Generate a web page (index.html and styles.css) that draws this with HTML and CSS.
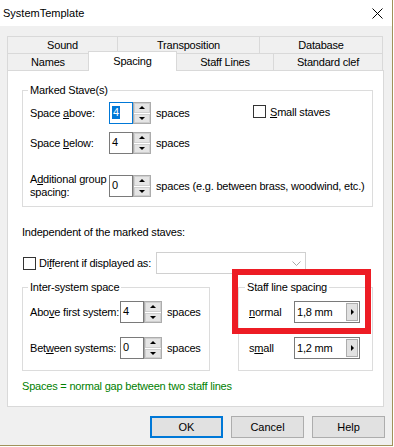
FILE: index.html
```html
<!DOCTYPE html>
<html>
<head>
	<meta charset="utf-8">
	<title>SystemTemplate</title>
	<link rel="stylesheet" href="styles.css">
</head>
<body>

	<div class="window">
		<div class="titlebar">
			<span class="title">SystemTemplate</span>
			<svg class="close" width="11" height="11" viewBox="0 0 11 11"><path d="M0.5 0.5L10.5 10.5M10.5 0.5L0.5 10.5" stroke="#000" stroke-width="1" fill="none"/></svg>
		</div>

		<div class="client">
			<div class="tabs">
				<div class="tabrow back">
					<div class="tab">Sound</div>
					<div class="tab">Transposition</div>
					<div class="tab">Database</div>
				</div>
				<div class="tabrow front">
					<div class="tab">Names</div>
					<div class="tab selected">Spacing</div>
					<div class="tab">Staff Lines</div>
					<div class="tab">Standard clef</div>
				</div>
			</div>

			<div class="panel">
				<fieldset class="group marked">
					<legend>Marked Stave(s)</legend>
					<div class="row">
						<span class="lbl">Space <u>a</u>bove:</span>
						<div class="num focus"><span class="sel">4</span></div>
						<div class="spin"><div class="up"><i></i></div><div class="down"><i></i></div></div>
						<span class="unit wide">spaces</span>
						<label class="check small-staves"><span class="box"></span><span><u>S</u>mall staves</span></label>
					</div>
					<div class="row">
						<span class="lbl">Space <u>b</u>elow:</span>
						<div class="num">4</div>
						<div class="spin"><div class="up"><i></i></div><div class="down"><i></i></div></div>
						<span class="unit">spaces</span>
					</div>
					<div class="row far">
						<span class="lbl two">A<u>d</u>ditional group<br>spacing:</span>
						<div class="num">0</div>
						<div class="spin"><div class="up"><i></i></div><div class="down"><i></i></div></div>
						<span class="unit">spaces (e.g. between brass, woodwind, etc.)</span>
					</div>
				</fieldset>

				<div class="indep">Independent of the marked staves:</div>

				<div class="row diff">
					<span class="box"></span>
					<span class="diff-lbl">Di<u>f</u>ferent if displayed as:</span>
					<div class="combo">
						<svg width="9" height="5" viewBox="0 0 9 5"><polyline points="0.5,0.5 4.5,4.5 8.5,0.5" stroke="#a8a8a8" fill="none"/></svg>
					</div>
				</div>

				<div class="lower">
					<fieldset class="group inter">
						<legend>Inter-system space</legend>
						<div class="row">
							<span class="lbl">Abo<u>v</u>e first system:</span>
							<div class="num">4</div>
							<div class="spin"><div class="up"><i></i></div><div class="down"><i></i></div></div>
							<span class="unit">spaces</span>
						</div>
						<div class="row">
							<span class="lbl">Bet<u>w</u>een systems:</span>
							<div class="num">0</div>
							<div class="spin"><div class="up"><i></i></div><div class="down"><i></i></div></div>
							<span class="unit">spaces</span>
						</div>
					</fieldset>

					<fieldset class="group staffline">
						<legend>Staff line spacing</legend>
						<div class="row">
							<span class="lbl"><u>n</u>ormal</span>
							<div class="pick"><span class="val">1,8 mm</span><span class="pick-btn"><i></i></span></div>
						</div>
						<div class="row">
							<span class="lbl">s<u>m</u>all</span>
							<div class="pick"><span class="val">1,2 mm</span><span class="pick-btn"><i></i></span></div>
						</div>
					</fieldset>
				</div>

				<div class="note">Spaces = normal gap between two staff lines</div>

				<div class="highlight"></div>
			</div>

			<div class="buttons">
				<button class="default">OK</button>
				<button>Cancel</button>
				<button>Help</button>
			</div>
		</div>
	</div>

</body>
</html>
```

FILE: styles.css
```css
html{
	background: #fff;
}
body{
	margin: 0;
	font-family: "Liberation Sans", Arial, sans-serif;
	font-size: 11px;
	letter-spacing: -0.2px;
	color: #000;
}
/*--------Ventana-----------*/
.window{
	width: 392px;
	height: 445px;
	border-right: 1px solid #a0925a;
	border-bottom: 1px solid #a0925a;
	background: #f0f0f0;
}
.titlebar{
	height: 26px;
	background: #fff;
	display: flex;
	align-items: center;
	justify-content: space-between;
	padding: 0 9px 0 3px;
}
.title{
	letter-spacing: 0;
}
.client{
	padding: 10px 0 0 7px;
}
/*--------Ventana-----------*/

/*--------Pestañas-----------*/
.tabrow{
	display: grid;
	width: 376px;
	height: 17px;
}
.tabrow.back{
	grid-template-columns: 110px 142px 124px;
}
.tabrow.front{
	grid-template-columns: 81px 89px 96px 110px;
}
.tab{
	box-sizing: border-box;
	border-top: 1px solid #d9d9d9;
	border-left: 1px solid #d9d9d9;
	text-align: center;
	line-height: 16px;
	background: #f0f0f0;
}
.tab:last-child{
	border-right: 1px solid #d9d9d9;
}
.tab.selected{
	align-self: start;
	height: 20px;
	margin-top: -2px;
	border-right: 1px solid #d9d9d9;
	background: #fff;
	line-height: 18px;
	position: relative;
	z-index: 1;
}
.tab.selected + .tab{
	border-left: none;
}
/*--------Pestañas-----------*/

.panel{
	position: relative;
	box-sizing: border-box;
	width: 377px;
	height: 337px;
	border: 1px solid #d9d9d9;
	background: #fff;
	padding: 0 10px 0 14px;
}

/*--------Grupos-----------*/
fieldset.group{
	margin: 0;
	min-width: 0;
	border: 1px solid #dcdcdc;
	box-sizing: border-box;
}
fieldset.group legend{
	padding: 0 2px;
	line-height: 14px;
}
.marked{
	margin-top: 12px !important;
	width: 351px;
	padding: 5px 0 9px 7px;
}
.marked legend{
	margin-left: -2px;
}
.lower{
	display: flex;
	gap: 28px;
	margin-top: 6px;
}
.inter{
	width: 188px;
	padding: 7px 0 11px 7px;
}
.inter legend{
	margin-left: -2px;
}
.staffline{
	width: 135px;
	padding: 7px 0 11px 10px;
}
.staffline legend{
	margin-left: -4px;
}
/*--------Grupos-----------*/

/*--------Filas y controles-----------*/
.row{
	display: flex;
	align-items: center;
	height: 22px;
	white-space: nowrap;
}
.row + .row{
	margin-top: 8px;
}
.row.far{
	margin-top: 21px;
}
.inter .row + .row, .staffline .row + .row{
	margin-top: 14px;
}
.lbl{
	width: 79px;
	flex-shrink: 0;
}
.lbl.two{
	line-height: 13px;
}
.inter .lbl{
	width: 90px;
}
.staffline .lbl{
	width: 45px;
}
.num{
	box-sizing: border-box;
	width: 24px;
	height: 22px;
	border: 1px solid #7a7a7a;
	background: #fff;
	padding: 2px 0 0 2px;
	line-height: 14px;
}
.num.focus{
	border-color: #0078d7;
}
.sel{
	display: inline-block;
	background: #0078d7;
	color: #fff;
	padding: 0 1px;
	line-height: 13px;
}
.spin{
	box-sizing: border-box;
	width: 18px;
	height: 22px;
	border: 1px solid #acacac;
	background: #fff;
	display: flex;
	flex-direction: column;
	gap: 1px;
}
.spin div{
	flex: 1;
	background: #e5e5e5;
	border: 1px solid #cfcfcf;
	display: flex;
	align-items: center;
	justify-content: center;
}
.spin i{
	width: 0;
	height: 0;
	border-left: 3px solid transparent;
	border-right: 3px solid transparent;
}
.spin .up i{
	border-bottom: 3px solid #000;
}
.spin .down i{
	border-top: 3px solid #000;
}
.unit{
	margin-left: 5px;
}
.unit.wide{
	width: 97px;
}
.check{
	display: flex;
	align-items: center;
	gap: 4px;
}
.small-staves{
	align-self: flex-start;
	margin-top: 3px;
}
.box{
	box-sizing: border-box;
	width: 13px;
	height: 13px;
	border: 1px solid #333;
	background: #fff;
	flex-shrink: 0;
}
.indep{
	margin-top: 18px;
	line-height: 14px;
}
.row.diff{
	margin-top: 13px;
	height: 22px;
}
.diff .box{
	margin-left: 1px;
	margin-right: 3px;
}
.diff-lbl{
	width: 117px;
}
.combo{
	box-sizing: border-box;
	width: 150px;
	height: 22px;
	border: 1px solid #d0d0d0;
	background: #fff;
	display: flex;
	align-items: center;
	justify-content: flex-end;
	padding-right: 4px;
}
.pick{
	box-sizing: border-box;
	width: 66px;
	height: 22px;
	border: 1px solid #7a7a7a;
	background: #fff;
	display: flex;
}
.pick .val{
	flex: 1;
	padding: 3px 0 0 2px;
	line-height: 14px;
}
.pick-btn{
	box-sizing: border-box;
	width: 12px;
	margin: 1px;
	background: #e1e1e1;
	border: 1px solid #adadad;
	display: flex;
	align-items: center;
	justify-content: center;
}
.pick-btn i{
	width: 0;
	height: 0;
	border-top: 3px solid transparent;
	border-bottom: 3px solid transparent;
	border-left: 3px solid #000;
}
.note{
	margin-top: 8px;
	line-height: 14px;
	color: #008000;
}
/*--------Filas y controles-----------*/

/*--------Marca roja-----------*/
.highlight{
	position: absolute;
	left: 224px;
	top: 198px;
	width: 139px;
	height: 65px;
	box-sizing: border-box;
	border: 6px solid #ed1c24;
}
/*--------Marca roja-----------*/

/*------------Botones-----------*/
.buttons{
	display: flex;
	justify-content: flex-end;
	gap: 8px;
	margin-top: 9px;
	padding-right: 7px;
}
button{
	box-sizing: border-box;
	width: 73px;
	height: 22px;
	border: 1px solid #adadad;
	background: #e1e1e1;
	font-family: "Liberation Sans", Arial, sans-serif;
	font-size: 11px;
	color: #000;
	padding: 0;
}
button.default{
	border: 2px solid #0078d7;
}
/*------------Botones-----------*/
```
